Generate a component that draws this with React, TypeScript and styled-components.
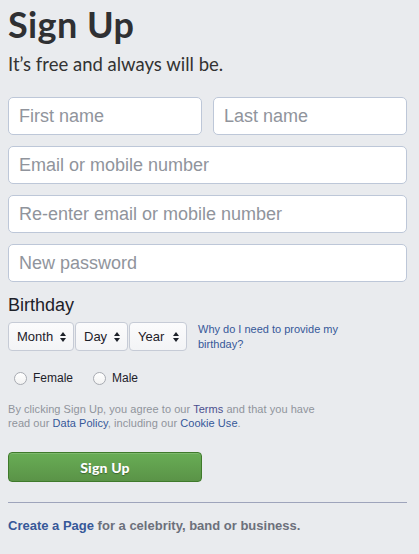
import styled, { createGlobalStyle } from "styled-components";

const GlobalStyle = createGlobalStyle`
  html, body {
    margin: 0;
    padding: 0;
    background-color: #e9ebee;
  }
  body {
    font-family: "Liberation Sans", Arial, sans-serif;
    color: #1d2129;
  }
`;

const Page = styled.div`
  width: 399px;
  padding: 4px 12px 20px 8px;
  display: flex;
  flex-direction: column;
`;

const Title = styled.h1`
  margin: 0;
  font-family: Lato, "Open Sans", sans-serif;
  font-weight: 700;
  font-size: 36px;
  line-height: 40px;
  color: #2f3033;
  letter-spacing: 0.4px;
`;

const Subtitle = styled.div`
  margin-top: 8px;
  font-family: Lato, "Open Sans", sans-serif;
  font-size: 18.5px;
  line-height: 24px;
  color: #333333;
`;

const Fields = styled.div`
  margin-top: 21px;
  display: flex;
  flex-direction: column;
  gap: 11px;
`;

const NameRow = styled.div`
  display: grid;
  grid-template-columns: 1fr 1fr;
  gap: 11px;
`;

const Input = styled.input`
  box-sizing: border-box;
  display: block;
  width: 100%;
  min-width: 0;
  height: 38px;
  flex-shrink: 0;
  margin: 0;
  padding: 0 10px;
  border: 1px solid #bdc7d8;
  border-radius: 5px;
  background: #ffffff;
  font-family: "Liberation Sans", Arial, sans-serif;
  font-size: 18px;
  color: #1d2129;
  outline: none;

  &::placeholder {
    color: #90949c;
  }
`;

const Label = styled.div`
  margin-top: 12px;
  font-size: 18px;
  line-height: 22px;
  color: #1d2129;
`;

const BirthdayRow = styled.div`
  margin-top: 6px;
  display: flex;
  align-items: flex-start;
`;

const Selects = styled.div`
  display: flex;
  gap: 1px;
`;

const SelectBox = styled.div<{ $width: number }>`
  box-sizing: border-box;
  width: ${(p) => p.$width}px;
  height: 29px;
  padding: 0 7px 0 8px;
  display: flex;
  align-items: center;
  justify-content: space-between;
  background: linear-gradient(#fbfbfc, #f3f4f6);
  border: 1px solid #c6cbd6;
  border-radius: 4px;
  font-size: 13px;
  color: #1d2129;
`;

const HelpLink = styled.a`
  margin-left: 11px;
  width: 180px;
  font-size: 11px;
  line-height: 15px;
  color: #365899;
  text-decoration: none;
`;

const GenderRow = styled.div`
  margin-top: 19px;
  padding-left: 6px;
  display: flex;
  align-items: center;
  gap: 20px;
`;

const RadioLabel = styled.label`
  display: flex;
  align-items: center;
  gap: 6px;
  font-size: 12px;
  line-height: 14px;
  color: #1d2129;
`;

const Radio = styled.span`
  box-sizing: border-box;
  width: 13px;
  height: 13px;
  border-radius: 50%;
  border: 1px solid #a8abb2;
  background: linear-gradient(#ffffff, #f2f2f2);
`;

const Terms = styled.p`
  margin: 17px 0 0;
  width: 330px;
  font-size: 11px;
  line-height: 14px;
  letter-spacing: 0.05px;
  color: #90949c;
`;

const TermLink = styled.a<{ $visited?: boolean }>`
  color: ${(p) => (p.$visited ? "#4b4f8f" : "#365899")};
  text-decoration: none;
`;

const SubmitButton = styled.button`
  box-sizing: border-box;
  margin-top: 22px;
  width: 194px;
  height: 30px;
  border: 1px solid #3f7a2b;
  border-radius: 4px;
  background: linear-gradient(#68ad55, #5a9347);
  box-shadow: inset 0 1px 0 rgba(255, 255, 255, 0.15);
  color: #ffffff;
  font-family: Lato, "Open Sans", sans-serif;
  font-weight: 900;
  font-size: 14px;
  letter-spacing: 0.2px;
  text-shadow: 0 1px 1px rgba(0, 0, 0, 0.35);
  cursor: pointer;
`;

const Divider = styled.hr`
  margin: 20px 0 0;
  border: none;
  border-top: 1px solid #9ea4bb;
`;

const Footer = styled.div`
  margin-top: 15px;
  font-size: 13px;
  line-height: 16px;
  font-weight: 700;
  color: #6c707b;
`;

const FooterLink = styled.a`
  color: #365899;
  text-decoration: none;
`;

const Arrows = () => (
  <svg width="6" height="10" viewBox="0 0 6 10">
    <path d="M3 0 L6 4 L0 4 Z M0 6 L6 6 L3 10 Z" fill="#1d2129" />
  </svg>
);

const selects = [
  { label: "Month", width: 66 },
  { label: "Day", width: 53 },
  { label: "Year", width: 58 },
];

const App = () => {
  return (
    <>
      <GlobalStyle />
      <Page>
        <Title>Sign Up</Title>
        <Subtitle>It’s free and always will be.</Subtitle>

        <Fields>
          <NameRow>
            <Input placeholder="First name" />
            <Input placeholder="Last name" />
          </NameRow>
          <Input placeholder="Email or mobile number" />
          <Input placeholder="Re-enter email or mobile number" />
          <Input placeholder="New password" type="password" />
        </Fields>

        <Label>Birthday</Label>
        <BirthdayRow>
          <Selects>
            {selects.map((s) => (
              <SelectBox key={s.label} $width={s.width}>
                <span>{s.label}</span>
                <Arrows />
              </SelectBox>
            ))}
          </Selects>
          <HelpLink href="#">Why do I need to provide my birthday?</HelpLink>
        </BirthdayRow>

        <GenderRow>
          <RadioLabel>
            <Radio />
            Female
          </RadioLabel>
          <RadioLabel>
            <Radio />
            Male
          </RadioLabel>
        </GenderRow>

        <Terms>
          By clicking Sign Up, you agree to our <TermLink href="#" $visited>Terms</TermLink> and that you have
          <br />
          read our <TermLink href="#">Data Policy</TermLink>, including our{" "}
          <TermLink href="#">Cookie Use</TermLink>.
        </Terms>

        <SubmitButton type="button">Sign Up</SubmitButton>

        <Divider />

        <Footer>
          <FooterLink href="#">Create a Page</FooterLink> for a celebrity, band or business.
        </Footer>
      </Page>
    </>
  );
};

export default App;
